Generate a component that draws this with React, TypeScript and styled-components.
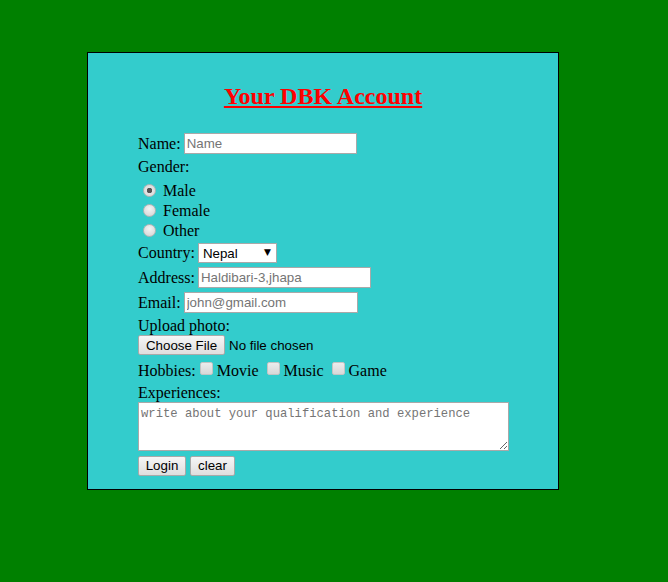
import React from 'react'
import styled, { createGlobalStyle } from 'styled-components'

const GlobalStyle = createGlobalStyle`
  html, body {
    margin: 0;
    padding: 0;
    background: #008000;
  }
  body {
    font-family: 'Liberation Serif', 'Times New Roman', serif;
    font-size: 16px;
    color: #000;
  }
`

const App = () => {
  return (
    <>
      <GlobalStyle />
      <Page>
        <Panel>
          <Title>Your DBK Account</Title>
          <Form onSubmit={(e) => e.preventDefault()}>
            <Row $h={21}>
              <Label>Name:</Label>
              <TextInput $w={173} placeholder="Name" />
            </Row>
            <Row $h={20} $mt={3}>
              <Label>Gender:</Label>
            </Row>
            <Row $h={20} $mt={4}>
              <Radio type="radio" name="gender" defaultChecked />
              <Label>Male</Label>
            </Row>
            <Row $h={20}>
              <Radio type="radio" name="gender" />
              <Label>Female</Label>
            </Row>
            <Row $h={20}>
              <Radio type="radio" name="gender" />
              <Label>Other</Label>
            </Row>
            <Row $h={20} $mt={2}>
              <Label>Country:</Label>
              <SelectWrap>
                <Select defaultValue="Nepal">
                  <option>Nepal</option>
                  <option>India</option>
                  <option>China</option>
                </Select>
                <Arrow>▼</Arrow>
              </SelectWrap>
            </Row>
            <Row $h={21} $mt={4}>
              <Label>Address:</Label>
              <TextInput $w={173} placeholder="Haldibari-3,jhapa" />
            </Row>
            <Row $h={21} $mt={4}>
              <Label>Email:</Label>
              <TextInput $w={174} placeholder="john@gmail.com" />
            </Row>
            <Row $h={18} $mt={4}>
              <Label>Upload photo:</Label>
            </Row>
            <Row $h={20}>
              <Button type="button" $w={87}>Choose File</Button>
              <FileText>No file chosen</FileText>
            </Row>
            <Row $h={20} $mt={6}>
              <Label $gap={0}>Hobbies:</Label>
              <Check type="checkbox" />
              <Label $gap={4}>Movie</Label>
              <Check type="checkbox" />
              <Label $gap={4}>Music</Label>
              <Check type="checkbox" />
              <Label>Game</Label>
            </Row>
            <Row $h={19} $mt={2}>
              <Label>Experiences:</Label>
            </Row>
            <Area placeholder="write about your qualification and experience" />
            <Row $h={19} $mt={5}>
              <Button type="submit" $w={48}>Login</Button>
              <Button type="reset" $w={45}>clear</Button>
            </Row>
          </Form>
        </Panel>
      </Page>
    </>
  )
}

export default App

const Page = styled.div`
  width: 668px;
  height: 582px;
  padding-top: 52px;
  padding-left: 87px;
  box-sizing: border-box;
`
const Panel = styled.div`
  width: 472px;
  height: 438px;
  box-sizing: border-box;
  border: 1px solid #000;
  background-color: #33cccc;
  padding-top: 29px;
`
const Title = styled.h1`
  margin: 0;
  height: 28px;
  line-height: 28px;
  font-size: 24px;
  font-weight: bold;
  color: #ff0000;
  text-decoration: underline;
  text-align: center;
`
const Form = styled.form`
  display: flex;
  flex-direction: column;
  padding-left: 50px;
  margin-top: 23px;
`
const Row = styled.div<{ $h: number; $mt?: number }>`
  display: flex;
  align-items: center;
  height: ${(p) => p.$h}px;
  margin-top: ${(p) => p.$mt || 0}px;
  white-space: nowrap;
`
const Label = styled.span<{ $gap?: number }>`
  font-size: 16px;
  line-height: 18px;
  margin-right: ${(p) => (p.$gap ?? 3)}px;
`
const TextInput = styled.input<{ $w: number }>`
  width: ${(p) => p.$w}px;
  height: 21px;
  box-sizing: border-box;
  border: 1px solid #a9a9a9;
  padding: 1px 2px;
  font-family: 'Liberation Sans', Arial, sans-serif;
  font-size: 13.33px;
  outline: none;
  &::placeholder {
    color: #757575;
  }
`
const SelectWrap = styled.div`
  position: relative;
  width: 79px;
  height: 20px;
`
const Select = styled.select`
  appearance: none;
  width: 79px;
  height: 20px;
  box-sizing: border-box;
  border: 1px solid #a9a9a9;
  background: #fff;
  padding: 0 4px;
  font-family: 'Liberation Sans', Arial, sans-serif;
  font-size: 13.33px;
  color: #000;
  border-radius: 0;
  outline: none;
`
const Arrow = styled.span`
  position: absolute;
  right: 6px;
  top: 4px;
  font-size: 9px;
  line-height: 10px;
  pointer-events: none;
  font-family: 'DejaVu Sans', sans-serif;
`
const Radio = styled.input`
  appearance: none;
  width: 13px;
  height: 13px;
  margin: 0 7px 0 5px;
  border-radius: 50%;
  border: 1px solid #b5b5b5;
  box-sizing: border-box;
  background: radial-gradient(circle at 50% 35%, #f4f4f4 0%, #dcdcdc 70%, #c8c8c8 100%);
  position: relative;
  top: -1px;
  &:checked {
    background: radial-gradient(circle, #555 0, #555 2.5px, #e4e4e4 3px, #d4d4d4 100%);
  }
`
const Check = styled.input`
  appearance: none;
  width: 13px;
  height: 13px;
  margin: 0 4px 0 4px;
  box-sizing: border-box;
  border: 1px solid #c4c4c4;
  border-radius: 2px;
  background: linear-gradient(#ececec, #d8d8d8);
  position: relative;
  top: -3px;
`
const Button = styled.button<{ $w: number }>`
  width: ${(p) => p.$w}px;
  height: 20px;
  box-sizing: border-box;
  margin-right: 4px;
  padding: 0;
  border: 1px solid #a9a9a9;
  border-radius: 2px;
  background: linear-gradient(#f6f6f6, #dedede);
  font-family: 'Liberation Sans', Arial, sans-serif;
  font-size: 13.33px;
  color: #000;
`
const FileText = styled.span`
  font-family: 'Liberation Sans', Arial, sans-serif;
  font-size: 13.33px;
`
const Area = styled.textarea`
  width: 371px;
  height: 49px;
  box-sizing: border-box;
  border: 1px solid #a9a9a9;
  padding: 4px 2px 2px;
  margin: 0;
  font-family: 'Liberation Mono', 'DejaVu Sans Mono', monospace;
  font-size: 12.2px;
  outline: none;
  &::placeholder {
    color: #757575;
  }
`
